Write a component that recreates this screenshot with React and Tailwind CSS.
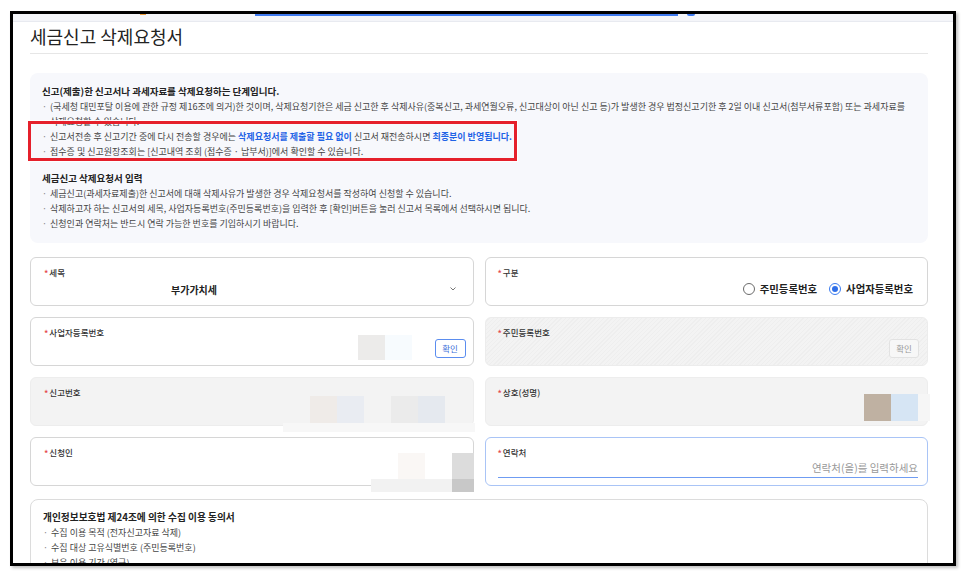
import React from "react";

const Req = () => (
  <span className="text-[#e5484d] text-[9px] leading-none mr-[1px] relative top-[1px]">*</span>
);

function Label({ children }) {
  return (
    <div className="flex items-center text-[8.5px] leading-[14px] text-[#333] font-medium">
      <Req />
      {children}
    </div>
  );
}

function Chevron() {
  return (
    <svg width="6" height="4" viewBox="0 0 6 4" className="text-[#666]">
      <polyline points="0.5,0.5 3,3 5.5,0.5" fill="none" stroke="currentColor" strokeWidth="0.9" />
    </svg>
  );
}

function Radio({ checked, children }) {
  return (
    <label className="flex items-center gap-[5px]">
      <span
        className={
          checked
            ? "w-[12px] h-[12px] rounded-full border border-[#3b7cf0] flex items-center justify-center bg-white"
            : "w-[12px] h-[12px] rounded-full border border-[#6b6b6b] bg-white"
        }
      >
        {checked && <span className="w-[6px] h-[6px] rounded-full bg-[#2f6fe8]" />}
      </span>
      <span className="text-[10.4px] font-bold text-[#222]">{children}</span>
    </label>
  );
}

const Bullet = ({ children }) => (
  <div className="whitespace-nowrap">
    <span className="text-[#888] mr-[3px]">·</span>
    {children}
  </div>
);

export default function App() {
  return (
    <div className="w-[966px] h-[576px] bg-white pt-[11px] pl-[10px] font-['Noto_Sans_CJK_KR','Noto_Sans',sans-serif]">
      <div className="relative w-[946px] h-[555px] border-[3px] border-black bg-white overflow-hidden flex flex-col shadow-[2px_2px_3px_rgba(0,0,0,0.25)]">
        {/* top nav remnant */}
        <div className="h-[8px] shrink-0 bg-[#f4f5f9] border-b border-[#e8eaf0] flex items-start">
          <div className="ml-[127px] w-[6px] h-[1px] bg-[#f0a040]" />
          <div className="ml-[109px] w-[423px] h-[2px] bg-[#3f7af0]" />
          <div className="ml-[9px] w-[8px] h-[2px] rounded-b bg-[#3f7af0]" />
        </div>

        <div className="pl-[17px] pr-[25px] flex flex-col">
          <h1 className="h-[32px] leading-[28px] text-[18px] text-[#222] font-normal border-b border-[#e6e6e6]">
            세금신고 삭제요청서
          </h1>

          {/* guidance box */}
          <div className="mt-[19px] rounded-[8px] bg-[#f7f8fc] pl-[12px] pr-[10px] pt-[11px] pb-[12.5px] text-[9px] leading-[15px] text-[#444]">
            <div className="font-bold text-[#222] text-[9.5px] whitespace-nowrap">
              신고(제출)한 신고서나 과세자료를 삭제요청하는 단계입니다.
            </div>
            <Bullet>
              (국세청 대민포탈 이용에 관한 규정 제16조에 의거)한 것이며, 삭제요청기한은 세금 신고한 후 삭제사유(중복신고, 과세연월오류, 신고대상이 아닌 신고 등)가 발생한 경우 법정신고기한 후 2일 이내 신고서(첨부서류포함) 또는 과세자료를
            </Bullet>
            <div className="pl-[8px] whitespace-nowrap">삭제요청할 수 있습니다.</div>
            <Bullet>
              신고서전송 후 신고기간 중에 다시 전송할 경우에는{" "}
              <b className="text-[#1f63e6]">삭제요청서를 제출할 필요 없이</b> 신고서 재전송하시면{" "}
              <b className="text-[#1f63e6]">최종분이 반영됩니다.</b>
            </Bullet>
            <Bullet>접수증 및 신고원장조회는 [신고내역 조회 (접수증 · 납부서)]에서 확인할 수 있습니다.</Bullet>

            <div className="mt-[11.5px] font-bold text-[#222] text-[9.5px] whitespace-nowrap">세금신고 삭제요청서 입력</div>
            <Bullet>세금신고(과세자료제출)한 신고서에 대해 삭제사유가 발생한 경우 삭제요청서를 작성하여 신청할 수 있습니다.</Bullet>
            <Bullet>
              삭제하고자 하는 신고서의 세목, 사업자등록번호(주민등록번호)을 입력한 후 [확인]버튼을 눌러 신고서 목록에서 선택하시면 됩니다.
            </Bullet>
            <Bullet>신청인과 연락처는 반드시 연락 가능한 번호를 기입하시기 바랍니다.</Bullet>
          </div>

          {/* form fields */}
          <div className="mt-[14px] grid grid-cols-2 gap-x-[11px] gap-y-[11px]">
            {/* 세목 */}
            <div className="h-[49px] rounded-[6px] border border-[#d6d6d6] bg-white pl-[13px] pr-[17px] pt-[7px]">
              <Label>세목</Label>
              <div className="flex items-center h-[20px]">
                <span className="ml-[127px] text-[10px] font-bold text-[#222]">부가가치세</span>
                <span className="ml-auto">
                  <Chevron />
                </span>
              </div>
            </div>

            {/* 구분 */}
            <div className="h-[49px] rounded-[6px] border border-[#d6d6d6] bg-white pl-[12px] pr-[14px] pt-[7px]">
              <Label>구분</Label>
              <div className="flex items-center justify-end h-[20px] gap-[12px]">
                <Radio>주민등록번호</Radio>
                <Radio checked>사업자등록번호</Radio>
              </div>
            </div>

            {/* 사업자등록번호 */}
            <div className="relative h-[49px] rounded-[6px] border border-[#d6d6d6] bg-white pl-[13px] pr-[7px] pt-[7px]">
              <Label>사업자등록번호</Label>
              <div className="flex justify-end">
                <button className="h-[19px] w-[31px] rounded-[3px] border border-[#5b8def] bg-white text-[8.5px] text-[#3d6fd9] leading-none">
                  확인
                </button>
              </div>
              <div className="absolute left-[327px] top-[17px] flex">
                <div className="w-[27px] h-[25px] bg-[#ecebea]" />
                <div className="w-[27px] h-[25px] bg-[#f7fbfe]" />
              </div>
            </div>

            {/* 주민등록번호 (disabled) */}
            <div className="h-[49px] rounded-[6px] border border-[#ececec] bg-[repeating-linear-gradient(135deg,#f3f3f3_0px,#f3f3f3_2px,#eeeeee_2px,#eeeeee_3px)] pl-[12px] pr-[8px] pt-[7px]">
              <Label>주민등록번호</Label>
              <div className="flex justify-end">
                <button className="h-[19px] w-[30px] rounded-[3px] border border-[#e2e2e2] bg-[#f7f7f7] text-[8.5px] text-[#999] leading-none">
                  확인
                </button>
              </div>
            </div>

            {/* 신고번호 (readonly) */}
            <div className="relative h-[49px] rounded-[6px] border border-[#ededed] bg-[#f3f3f3] pl-[13px] pt-[7px]">
              <Label>신고번호</Label>
              <div className="absolute left-[279px] top-[18px] flex">
                <div className="w-[27px] h-[27px] bg-[#efebe8]" />
                <div className="w-[27px] h-[27px] bg-[#e9ecf2]" />
                <div className="ml-[27px] w-[27px] h-[27px] bg-[#ebebeb]" />
                <div className="w-[27px] h-[27px] bg-[#e5e9ef]" />
              </div>
              <div className="absolute left-[252px] top-[45px] w-[192px] h-[9px] bg-[#f7f7f7]" />
            </div>

            {/* 상호(성명) (readonly) */}
            <div className="relative h-[49px] rounded-[6px] border border-[#ededed] bg-[#f3f3f3] pl-[12px] pt-[7px]">
              <Label>상호(성명)</Label>
              <div className="absolute left-[378px] top-[16px] flex">
                <div className="w-[27px] h-[27px] bg-[#bfb1a2]" />
                <div className="w-[27px] h-[27px] bg-[#d6e5f4]" />
                <div className="w-[12px] h-[27px] bg-[#f6f6f6]" />
              </div>
            </div>

            {/* 신청인 */}
            <div className="relative h-[49px] rounded-[6px] border border-[#d6d6d6] bg-white pl-[13px] pt-[7px]">
              <Label>신청인</Label>
              <div className="absolute left-[367px] top-[15px] flex">
                <div className="w-[27px] h-[26px] bg-[#faf7f5]" />
                <div className="w-[27px] h-[26px] bg-white" />
                <div className="w-[22px] h-[26px] bg-[#dcdcdc]" />
              </div>
              <div className="absolute left-[340px] top-[41px] flex">
                <div className="w-[81px] h-[13px] bg-[#f2f2f2]" />
                <div className="w-[22px] h-[13px] bg-[#c8c8c8]" />
              </div>
            </div>

            {/* 연락처 (focused) */}
            <div className="h-[49px] rounded-[6px] border border-[#a9c4f6] bg-white pl-[12px] pr-[9px] pt-[7px]">
              <Label>연락처</Label>
              <div className="h-[19px] border-b border-[#6f9cf2] flex items-center justify-end">
                <span className="text-[10.5px] text-[#999] leading-none">연락처(을)를 입력하세요</span>
              </div>
            </div>
          </div>

          {/* consent */}
          <div className="mt-[13px] h-[90px] rounded-[8px] border border-[#dcdcdc] bg-white pl-[12px] pt-[10px] text-[9px] leading-[15px] text-[#444]">
            <div className="font-bold text-[#222] text-[9.7px] whitespace-nowrap">
              개인정보보호법 제24조에 의한 수집 이용 동의서
            </div>
            <Bullet>수집 이용 목적 (전자신고자료 삭제)</Bullet>
            <Bullet>수집 대상 고유식별번호 (주민등록번호)</Bullet>
            <Bullet>보유 이용 기간 (영구)</Bullet>
          </div>
        </div>

        {/* highlight annotation */}
        <div className="absolute left-[15px] top-[107px] w-[489px] h-[40px] border-[3px] border-[#e5202b] shadow-[0_0_0_1px_rgba(255,255,255,0.9)] pointer-events-none" />
      </div>
    </div>
  );
}
